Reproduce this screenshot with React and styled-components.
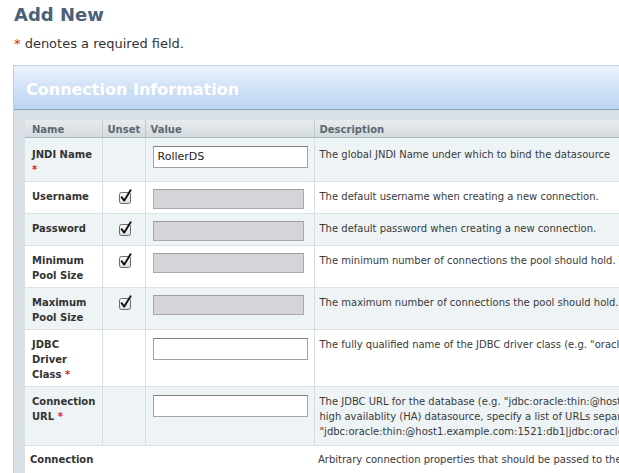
import React from "react";
import styled, { createGlobalStyle } from "styled-components";

const Global = createGlobalStyle`
  html, body { margin: 0; padding: 0; background: #fff; overflow: hidden; }
  body { font-family: "DejaVu Sans", Verdana, sans-serif; color: #333; }
`;

const Page = styled.div`
  width: 619px;
  height: 473px;
  overflow: hidden;
  padding: 4px 0 0 13px;
  box-sizing: border-box;
`;

const Title = styled.h1`
  margin: 0 0 0 1px;
  font-size: 18px;
  line-height: 22px;
  font-weight: bold;
  color: #4b6179;
`;

const Note = styled.p`
  margin: 10px 0 0 1px;
  font-size: 13px;
  line-height: 16px;
  color: #333;
  white-space: nowrap;
`;

const Req = styled.span`
  color: #d9262c;
  font-size: ${(p) => (p.$small ? "10px" : "13px")};
`;

const Panel = styled.section`
  margin-top: 13px;
  width: 760px;
  border: 1px solid #bcd0e6;
  background: #d9e0e5;
`;

const PanelHeader = styled.h2`
  margin: 0;
  height: 44px;
  padding: 14px 0 0 12px;
  box-sizing: border-box;
  font-size: 16px;
  line-height: 20px;
  font-weight: bold;
  color: #fff;
  background: linear-gradient(#edf3fc 0%, #d3e3f8 45%, #bcd4f4 100%);
  border-bottom: 1px solid #8ea1b5;
`;

const PanelBody = styled.div`
  padding: 10px 0 0 11px;
`;

const Table = styled.table`
  border-collapse: collapse;
  table-layout: fixed;
  width: 740px;
  background: #fff;
  font-size: 10px;
`;

const Th = styled.th`
  text-align: left;
  font-weight: bold;
  color: #5b6873;
  padding: 3px 5px 1px ${(p) => (p.$first ? "7px" : "5px")};
  line-height: 13px;
  background: linear-gradient(#e7ebed, #d3dadf);
  border-left: ${(p) => (p.$first ? "none" : "1px solid #bfc9d0")};
  border-bottom: 1px solid #a9b6c0;
`;

const Row = styled.tr`
  background: ${(p) => (p.$alt ? "#eef3f6" : "#fff")};
  border-bottom: 1px solid #dce3e8;
`;

const Td = styled.td`
  vertical-align: top;
  padding: ${(p) =>
    p.$plain ? "6px 4px 6px 5px" : `${p.$pt || 7}px 6px ${p.$pb || 4}px 7px`};
  line-height: 15px;
  border-left: ${(p) => (p.$first || p.$plain ? "none" : "1px solid #d6dee4")};
`;

const Label = styled(Td)`
  font-weight: bold;
  color: #333;
`;

const UnsetCell = styled(Td)`
  text-align: center;
  padding-left: 8px;
  padding-right: 4px;
`;

const Desc = styled(Td)`
  padding-left: ${(p) => (p.$plain ? "4px" : "5px")};
  color: #3a3a3a;
  white-space: nowrap;
`;

const Input = styled.div`
  box-sizing: border-box;
  width: ${(p) => (p.$disabled ? "151px" : "155px")};
  height: ${(p) => (p.$disabled ? "20px" : "22px")};
  margin-top: ${(p) => (p.$disabled ? "0" : "1px")};
  background: ${(p) => (p.$disabled ? "#d5d4d9" : "#fff")};
  border: 1px solid ${(p) => (p.$disabled ? "#a9a9ad" : "#a3a3a3")};
  border-top-color: ${(p) => (p.$disabled ? "#9d9da1" : "#7e7e7e")};
  font-size: 11px;
  line-height: 20px;
  padding-left: 4px;
  color: #222;
`;

const CheckWrap = styled.span`
  display: inline-block;
`;

function Check() {
  return (
    <CheckWrap>
      <svg width="14" height="15" viewBox="0 0 14 15" style={{ display: "block" }}>
        <defs>
          <linearGradient id="cbg" x1="0" y1="0" x2="0" y2="1">
            <stop offset="0" stopColor="#fdfdfd" />
            <stop offset="1" stopColor="#dedede" />
          </linearGradient>
        </defs>
        <rect x="0.5" y="3.5" width="11" height="11" rx="2" fill="url(#cbg)" stroke="#6b6b6b" />
        <path d="M2.6 8.2 L5.3 11.6 L11.6 1.2" fill="none" stroke="#111" strokeWidth="1.9" strokeLinecap="round" strokeLinejoin="round" />
      </svg>
    </CheckWrap>
  );
}

const rows = [
  { name: "JNDI Name", req: true, value: "RollerDS", input: "white", textPt: 9, desc: ["The global JNDI Name under which to bind the datasource"] },
  { name: "Username", unset: true, input: "disabled", desc: ["The default username when creating a new connection."] },
  { name: "Password", unset: true, input: "disabled", desc: ["The default password when creating a new connection."] },
  { name: "Minimum Pool Size", unset: true, input: "disabled", desc: ["The minimum number of connections the pool should hold. The pool will be filled to this size when it is started."] },
  { name: "Maximum Pool Size", unset: true, input: "disabled", desc: ["The maximum number of connections the pool should hold. If more are requested, callers will wait."] },
  { name: "JDBC Driver Class", req: true, input: "white", desc: ["The fully qualified name of the JDBC driver class (e.g. \"oracle.jdbc.OracleDriver\")"] },
  {
    name: "Connection URL",
    req: true,
    input: "white",
    pb: 6,
    desc: [
      "The JDBC URL for the database (e.g. \"jdbc:oracle:thin:@host.example.com:1521:db\"). To configure a",
      "high availablity (HA) datasource, specify a list of URLs separated by a pipe character (e.g.",
      "\"jdbc:oracle:thin:@host1.example.com:1521:db1|jdbc:oracle:thin:@host2.example.com:1521:db2\").",
    ],
  },
];

export default function App() {
  return (
    <>
      <Global />
      <Page>
        <Title>Add New</Title>
        <Note>
          <Req>*</Req> denotes a required field.
        </Note>
        <Panel>
          <PanelHeader>Connection Information</PanelHeader>
          <PanelBody>
            <Table>
              <colgroup>
                <col style={{ width: 77 }} />
                <col style={{ width: 43 }} />
                <col style={{ width: 169 }} />
                <col />
              </colgroup>
              <thead>
                <tr>
                  <Th $first>Name</Th>
                  <Th>Unset</Th>
                  <Th>Value</Th>
                  <Th>Description</Th>
                </tr>
              </thead>
              <tbody>
                {rows.map((r, i) => (
                  <Row key={i} $alt={i % 2 === 0}>
                    <Label $first $pt={r.textPt} $pb={r.pb}>
                      {r.name}
                      {r.req && (
                        <>
                          {" "}
                          <Req $small>*</Req>
                        </>
                      )}
                    </Label>
                    <UnsetCell $pb={r.pb}>{r.unset && <Check />}</UnsetCell>
                    <Td $pb={r.pb}>
                      <Input $disabled={r.input === "disabled"}>{r.value || ""}</Input>
                    </Td>
                    <Desc $pt={r.textPt} $pb={r.pb}>
                      {r.desc.map((d, j) => (
                        <div key={j}>{d}</div>
                      ))}
                    </Desc>
                  </Row>
                ))}
                <Row>
                  <Label $plain>Connection</Label>
                  <Td $plain />
                  <Td $plain />
                  <Desc $plain>Arbitrary connection properties that should be passed to the JDBC driver</Desc>
                </Row>
              </tbody>
            </Table>
          </PanelBody>
        </Panel>
      </Page>
    </>
  );
}
